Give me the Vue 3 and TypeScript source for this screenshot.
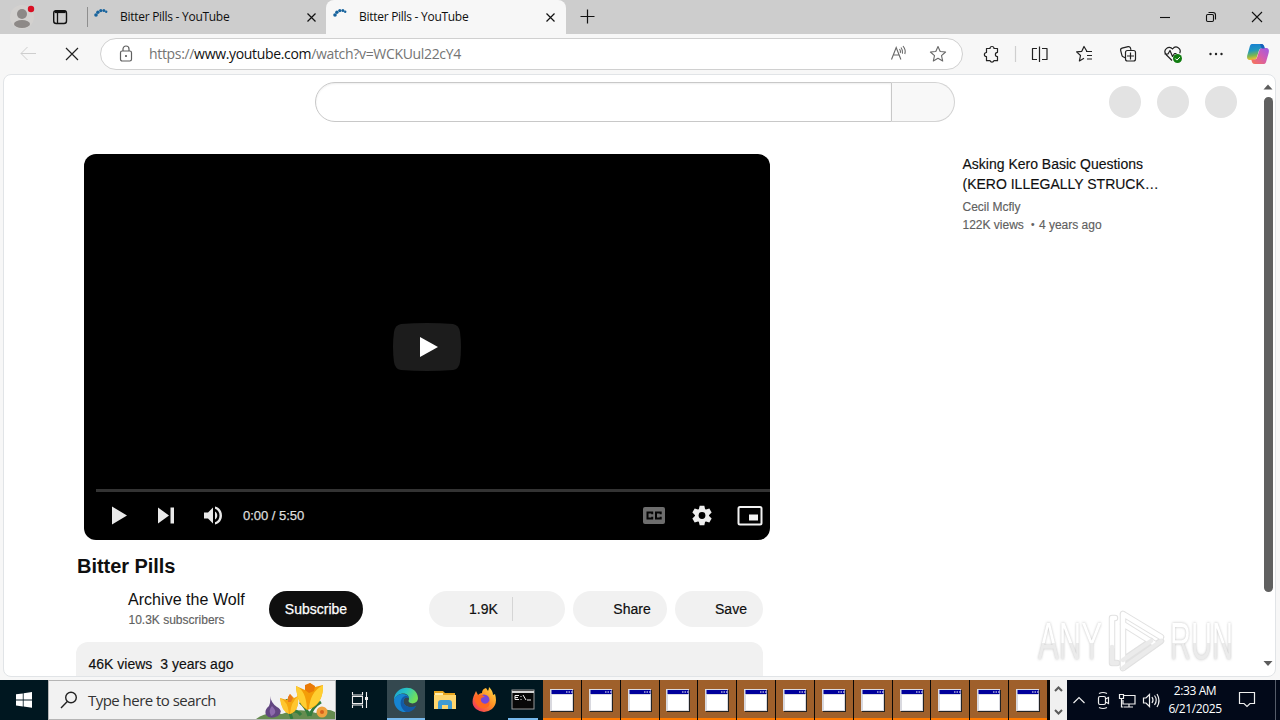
<script setup lang="ts">
interface Tab { title: string; active: boolean }
const tabs: Tab[] = [
  { title: 'Bitter Pills - YouTube', active: false },
  { title: 'Bitter Pills - YouTube', active: true },
]
const windowCount = 13
</script>

<template>
  <div class="screen">
    <header class="tabbar">
      <svg class="profile" width="48" height="34" viewBox="0 0 48 34">
        <circle cx="22" cy="17" r="12" fill="#d3d1cf" />
        <circle cx="22" cy="14" r="5" fill="#8d8987" />
        <ellipse cx="22" cy="24" rx="8" ry="4" fill="#8d8987" />
        <circle cx="31" cy="9" r="3.200" fill="#d90f23" />
      </svg>
      <svg class="workspaces" width="39" height="34" viewBox="48 0 39 34" fill="none" stroke="#111">
        <rect x="53.700" y="10.700" width="12.800" height="12.800" rx="2.500" stroke-width="1.400" />
        <path d="M57.500 13v10" stroke-width="1.300" /><path d="M55 11.700h10.500" stroke-width="2.800" />
      </svg>
      <div v-for="(tab, i) in tabs" :key="i" class="tab" :class="{ active: tab.active }">
        <svg class="spinner" width="16" height="16" viewBox="0 0 16 16">
          <g fill="#17639d"><circle cx="2" cy="7" r="1.800" /><circle cx="3.900" cy="4.200" r="1.700" /><circle cx="6.800" cy="2.600" r="1.600" /><circle cx="9.900" cy="2.500" r="1.500" /><circle cx="12.200" cy="3.700" r="1.200" /></g>
        </svg>
        <span class="tab-title">{{ tab.title }}</span>
        <svg class="close" width="9" height="9" viewBox="0 0 9 9"><path d="M.5.5l8 8M8.500.5l-8 8" stroke="#111" stroke-width="1.200" /></svg>
      </div>
      <svg width="40" height="34" viewBox="566 0 40 34"><path d="M580.500 16.500h14M587.500 9.500v14" stroke="#111" stroke-width="1.200" /></svg>
      <svg class="wincontrols" width="139" height="34" viewBox="1141 0 139 34" fill="none" stroke="#111" stroke-width="1.100">
        <path d="M1160 17.500h10" />
        <rect x="1206.500" y="14.500" width="7" height="7" rx="1.200" /><path d="M1208.500 12.500h4.500q2.500 0 2.500 2.500v4.500" />
        <path d="M1252 12l10 10M1262 12l-10 10" />
      </svg>
    </header>

    <nav class="toolbar">
      <svg width="100" height="40" viewBox="0 34 100 40" fill="none">
        <path d="M36 53.500H21M27.500 47l-6.500 6.500 6.500 6.500" stroke="#cecece" />
        <path d="M66 48l12 12M78 48l-12 12" stroke="#222" stroke-width="1.200" />
      </svg>
      <div class="address">
        <svg class="lock" width="14" height="18" viewBox="0 0 14 18" fill="none" stroke="#5f5f5f" stroke-width="1.200">
          <rect x="1.500" y="6" width="11" height="10" rx="1.700" /><path d="M4 6V4a3 3 0 0 1 6 0v2" /><circle cx="7" cy="11" r=".5" fill="#5f5f5f" />
        </svg>
        <span class="url">https://<b>www.youtube.com</b>/watch?v=WCKUul22cY4</span>
        <svg class="address-icons" width="72" height="30" viewBox="885 39 72 30" fill="none" stroke="#686868" stroke-width="1.100">
          <path d="M891.500 59.500l4.700-12 4.700 12M893.300 55h6" /><path d="M899.500 49q1.500 2 .8 4M901 47.500q2.200 2.800 1.500 6.200M903 46q3.200 4 1.800 8" />
          <path d="M938 46.500l2.200 5 5.400.5-4.100 3.600 1.200 5.400-4.700-2.800-4.700 2.800 1.200-5.400-4.100-3.600 5.400-.5z" stroke-linejoin="round" />
        </svg>
      </div>
      <svg class="tools" width="317" height="40" viewBox="963 34 317 40" fill="none" stroke="#222" stroke-width="1.200" stroke-linejoin="round">
        <path d="M986.500 48.500h3.500a2 2 0 1 1 4 0h3.500v3.800a2 2 0 1 0 0 4.200v4.200h-3.600a2 2 0 0 1-3.800 0h-3.600v-4a2 2 0 1 1 0-4.200z" />
        <path d="M1015.500 46v16" stroke="#cfcfcf" />
        <path d="M1037 48.500h-4.500v11h4.500M1042 48.500h5v11h-5M1039.500 46.500v15.500" />
        <path d="M1087 51.500l-3-5-2.200 4.800-5.200.6 3.900 3.600-1.100 5.400 4.600-2.700" /><path d="M1086 51.500h6M1087 55.500h5M1087 59h5" />
        <path d="M1125 57.800l-2.300-1.300a2 2 0 0 1-.7-.9l-1.300-5a2 2 0 0 1 1.400-2.400l6-1.600a2 2 0 0 1 2.300 1.200l.6 2" /><rect x="1125.500" y="50.500" width="10" height="10.500" rx="2" /><path d="M1130.500 52.500v7M1127 56h7" />
        <path d="M1172 60.500l-6-6c-3.500-4.500 3-10 6.500-5.500 3.500-4.500 9.300-.5 7.200 4.200M1164.500 54h3.500l2-3.500 2.500 6 2-3h2" />
        <circle cx="1177.500" cy="58.500" r="4.500" fill="#107c10" stroke="none" /><path d="M1175.300 58.500l1.600 1.600 3-3" stroke="#fff" stroke-width="1" />
        <g fill="#222" stroke="none"><circle cx="1210.500" cy="54" r="1.200" /><circle cx="1216" cy="54" r="1.200" /><circle cx="1221.500" cy="54" r="1.200" /></g>
        <defs>
          <linearGradient id="cpA" x1="0" y1="0" x2=".2" y2="1"><stop stop-color="#167dd7" /><stop offset=".45" stop-color="#2298bd" /><stop offset=".75" stop-color="#79b653" /><stop offset="1" stop-color="#f4c230" /></linearGradient>
          <linearGradient id="cpB" x1="1" y1="0" x2="0" y2="1"><stop stop-color="#9b5be6" /><stop offset=".45" stop-color="#d25bb2" /><stop offset="1" stop-color="#fb7650" /></linearGradient>
        </defs>
        <g stroke="none">
          <path d="M1252 44h9c2.500 0 3 1.500 3.700 4.500h-3c-2 0-2.600 1.300-3 2.700l-1.700 5.500c-.6 2.100-1.400 3.300-3.500 3.300h-3.500c-3 0-3.400-2.500-2.500-5.500l2-7c.6-2 1-3.500 2.500-3.500z" fill="url(#cpA)" />
          <path d="M1264 64h-9c-2.500 0-3-1.500-3.700-4.500h3c2 0 2.600-1.300 3-2.700l1.700-5.500c.6-2.100 1.400-3.300 3.500-3.300h3.500c3 0 3.400 2.500 2.500 5.500l-2 7c-.6 2-1 3.500-2.500 3.500z" fill="url(#cpB)" />
          <path d="M1260 44h1.500c2 0 2.600 1.600 3.200 4.500h-3z" fill="#1760bb" />
        </g>
      </svg>
    </nav>

    <div class="viewport">
      <main class="page">
        <div class="masthead">
          <div class="searchbox"></div><div class="searchbutton"></div>
          <div class="avatars"><i></i><i></i><i></i></div>
        </div>
        <div class="columns">
          <section class="primary">
            <div class="player">
              <div class="stage">
                <svg width="68" height="48" viewBox="0 0 68 48"><path d="M8 1Q34-1 60 1Q66 2 67 9Q69 24 67 39Q66 46 60 47Q34 49 8 47Q2 46 1 39Q-1 24 1 9Q2 2 8 1Z" fill="#1c1c1c" /><path d="M27 14l18 10-18 10z" fill="#fff" /></svg>
              </div>
              <div class="progress"></div>
              <div class="controls">
                <svg width="147" height="46" viewBox="84 493 147 46" fill="#e9e9e9">
                  <path d="M112 507.500l15 9-15 9zM158 508.500l11 8-11 8zM170.500 508.500h3.500v16h-3.500z" />
                  <path d="M204 513.500v6h4l5 5v-16l-5 5zM215 512.500c3 1.500 3 6.500 0 8zM215 507.500v2.200c6 1.800 6 11.800 0 13.600v2.200c9.300-2 9.300-16 0-18z" />
                </svg>
                <span class="time">0:00 / 5:50</span>
                <svg class="right-controls" width="140" height="46" viewBox="630 493 140 46">
                  <rect x="643" y="508" width="22" height="17" rx="2" fill="#6d6d6d" />
                  <path d="M652.200 515.200v-1.700h-4.700v6h4.700v-1.700M660.700 515.200v-1.700H656v6h4.700v-1.700" fill="none" stroke="#050505" stroke-width="2" />
                  <g transform="translate(702 516.500)" fill="#eee"><g v-for="n in 6" :key="n" :transform="`rotate(${n * 60})`"><path d="M-2.300-9.800h4.600l1.200 5h-7z" /></g><circle r="7" /></g>
                  <circle cx="702" cy="516.500" r="3.400" fill="#000" />
                  <rect x="738.500" y="508" width="23" height="17.500" rx="1.500" fill="none" stroke="#f2f2f2" stroke-width="2" /><path d="M749 515.500h9v6h-9z" fill="#f2f2f2" />
                </svg>
              </div>
            </div>
            <h1>Bitter Pills</h1>
            <div class="meta">
              <div class="owner"><div class="channel">Archive the Wolf</div><div class="subs">10.3K subscribers</div></div>
              <button class="subscribe">Subscribe</button>
              <button class="pill like"><span>1.9K</span><i></i></button>
              <button class="pill share">Share</button>
              <button class="pill save">Save</button>
            </div>
            <div class="description"><span>46K views</span><span>3 years ago</span></div>
          </section>
          <aside class="related">
            <div class="related-title">Asking Kero Basic Questions<br>(KERO ILLEGALLY STRUCK…</div>
            <div class="byline">Cecil Mcfly</div>
            <div class="stats"><span>122K views</span><span class="dot">•</span><span>4 years ago</span></div>
          </aside>
        </div>
      </main>
      <div class="scrollbar">
        <svg width="14" height="10" viewBox="0 0 14 10"><path d="M7 2.500l4.500 5h-9z" fill="#5c5c5c" /></svg>
        <div class="thumb"></div>
        <svg class="down" width="14" height="10" viewBox="0 0 14 10"><path d="M2.500 2h9L7 7z" fill="#5c5c5c" /></svg>
      </div>
      <div class="watermark">
        <span class="any">ANY</span>
        <svg width="66" height="68" viewBox="-1 0 66 68" fill="none" stroke-linejoin="round" stroke-linecap="round">
          <path d="M18 7v54M18 7l38 23M18 17l32 20M10 11H7v45h5M56 34L18 61M46 34L18 53" stroke="#dedede" stroke-width="6.500" />
          <path d="M18 7v54M18 7l38 23M18 17l32 20M10 11H7v30" stroke="#fff" stroke-width="4.500" />
          <path d="M56 34L18 61M46 34L18 53M7 40v16h5" stroke="#e9e9e9" stroke-width="4.500" />
        </svg>
        <span class="run">RUN</span>
      </div>
    </div>

    <footer class="taskbar">
      <div class="start"><svg width="16" height="16" viewBox="0 0 16 16"><path d="M0 2.300l6.800-.9v6.100H0zM7.600 1.300L16 .1v7.400H7.600zM0 8.400h6.800v6.100L0 13.600zM7.600 8.400H16v7.400l-8.400-1.200z" fill="#fff" /></svg></div>
      <div class="tasksearch">
        <svg class="magnifier" width="18" height="18" viewBox="0 0 18 18" fill="none" stroke="#222" stroke-width="1.400"><circle cx="11" cy="6.500" r="5.300" /><path d="M7.300 10.500L1 17" /></svg>
        <span>Type here to search</span>
        <svg class="flowers" width="79" height="38" viewBox="257 681 79 38">
          <path d="M257 719q10-8 26-5q18-7 34-1q10-6 19-1v7z" fill="#668c50" />
          <path d="M293 719q-3-8-5-20M310 716q-3-9-9-14M311 716q2-9 11-14M302 715q-5-6-9-3" fill="none" stroke="#337c3e" stroke-width="3" />
          <path d="M271 696q1 7 7 11q7 4 1 9q-8 4-12-1q-2-5 3-9q2-4 1-10z" fill="#624681" /><path d="M273 706q-4 4-1 10q8-3 1-10z" fill="#8c6aac" />
          <path d="M281 698l7 2 3-6 4 4 4-2q1 17-9 18q-7-3-9-16z" fill="#f5a50f" /><path d="M281 698q8 3 9 16q-8-3-9-16zM299 696q-7 6-8 18q10-4 8-18z" fill="#ffc62f" /><path d="M289 697l2-3 3 4-2 4h-3z" fill="#e8791c" />
          <path d="M297 686l9 4 5-7 5 4 8-2q0 21-16 25q-10-6-11-24z" fill="#f49d07" /><path d="M297 686q10 4 11 23q-10-5-11-23zM324 685q-13 7-14 24q15-6 14-24z" fill="#ffce31" /><path d="M306 685l5-2 5 3-1 5-5 2-4-3z" fill="#e97907" />
          <circle cx="323" cy="712" r="5.500" fill="#f0a23e" /><circle cx="323" cy="712" r="2" fill="#d7611b" />
        </svg>
      </div>
      <div class="taskview"><svg width="18" height="18" viewBox="0 0 18 18" fill="none" stroke="#eee" stroke-width="1.100"><path d="M1.500 1v3h10V1M1.500 17v-3h10v3M1.500 5.500v7h10v-7zM15.500 1v16" /><path d="M15.500 6v3" stroke-width="3" /></svg></div>
      <div class="app edge">
        <svg width="26" height="26" viewBox="0 0 26 26">
          <defs><linearGradient id="eg" x1="0" y1="0" x2="1" y2=".4"><stop stop-color="#169bd7" /><stop offset=".5" stop-color="#29c4c3" /><stop offset="1" stop-color="#71df5a" /></linearGradient></defs>
          <path d="M1 13C1-2 24-4 25 11c0 5-6 7-9 4-1-1 0-1.500 0-3.500C16 5 5 4 1 13z" fill="url(#eg)" />
          <path d="M1 13C4 5 15 6 16 11c-2-2-6 0-5.500 4C11 20 19 22 23 19 15 30 1 25 1 13z" fill="#1685d2" /><path d="M12 9c-6 2-6 12 1 16 5 0 8-2 10-6-7 3-13-1-12.500-5 0-2 1-4 5-3C15 9.500 14 8.500 12 9z" fill="#125aa6" />
        </svg>
      </div>
      <div class="app"><svg width="24" height="22" viewBox="0 0 24 22"><path d="M1 2h9l2 2h10v6H1z" fill="#e8a51d" /><path d="M1 6h22v14H1z" fill="#ffd66d" /><path d="M2 4h8v2H2z" fill="#fff0b0" /><path d="M5 20v-6q0-3 3-3h8q3 0 3 3v6h-4v-4H9v4z" fill="#409bd4" /></svg></div>
      <div class="app"><svg width="26" height="26" viewBox="0 0 26 26">
        <defs><linearGradient id="ff" x1="1" y1="0" x2="0" y2="1"><stop stop-color="#ffe84a" /><stop offset=".45" stop-color="#ff8e23" /><stop offset="1" stop-color="#ee2468" /></linearGradient></defs>
        <path d="M5 4l2 4q2-2 4-2 0-4 4-5l2 3q1-2 1-4 4 4 4 8l2-1q3 10-3 15-8 6-16 0C-1 17 2 10 5 4z" fill="url(#ff)" /><circle cx="13" cy="13" r="5.500" fill="#7548d8" /><path d="M4 9q6-3 10 1-5 0-4 4c2 4 7 3 8 0 3 6-6 10-11 5-3-3-4-7-3-10z" fill="#ff671f" />
      </svg></div>
      <div class="app cmd"><svg width="24" height="22" viewBox="0 0 24 22"><rect x="1" y="1" width="22" height="19" fill="#080808" stroke="#999" /><path d="M1 2h22v2H1z" fill="#d5d5d5" /><path d="M8 6.500H4v4h4M10 7v1M10 10v1M12 6l3 5M16 11h4M4 8.500h3" stroke="#eee" fill="none" /></svg></div>
      <div class="windows">
        <div v-for="n in windowCount" :key="n" class="app winapp"><svg width="25" height="24" viewBox="0 0 25 24"><path d="M1 1h23v22H1z" fill="#222" /><path d="M0 0h23v22H0z" fill="#d9d9df" /><path d="M1.500 1h21v4h-21z" fill="#00009b" /><path d="M16 3h1.500M18.500 3H20M21 3h1.500" stroke="#fff" /><path d="M2 6h20v15H2z" fill="#fff" /></svg></div>
      </div>
      <div class="overflow"><svg width="17" height="40" viewBox="0 0 17 40" fill="none" stroke="#5a5a5a" stroke-width="2"><path d="M5 11l3.500-3.500L12 11M5 30l3.500 3.500L12 30" /></svg></div>
      <div class="tray">
        <svg width="96" height="40" viewBox="1067 680 96 40" fill="none" stroke="#eee" stroke-width="1.200">
          <path d="M1073.500 703l5.500-5.500 5.500 5.500" /><rect x="1098.500" y="696.500" width="7" height="8" rx="1.500" /><path d="M1105.500 699l3-1.500v6l-3-1.500M1099 693.500q4-2 8 0M1099 707.500q4 2 8 0" />
          <path d="M1124 695.500h11v8.500h-12v-4M1129 704v3M1124 707h9M1119.500 694.500h4v4h-4zM1121.500 699v8h2" />
          <path d="M1143.500 698v5h2.500l3.500 3.500v-12L1146 698zM1152 697q2 3 0 6M1154.500 695.500q3.500 4.500 0 9.500M1157 694q4 6.500 0 13" />
        </svg>
        <div class="clock"><span>2:33 AM</span><span>6/21/2025</span></div>
        <svg class="notice" width="18" height="18" viewBox="0 0 18 18" fill="none" stroke="#eee" stroke-width="1.200"><path d="M1.500 1.500h15v11H12l-3 3-3-3H1.500z" /></svg>
        <i class="showdesktop"></i>
      </div>
    </footer>
  </div>
</template>

<style>
body { overflow: hidden; }
</style>
<style scoped>
* { box-sizing: border-box; }
svg { display: block; flex: none; }
.screen { width: 1280px; height: 720px; display: flex; flex-direction: column; background: #f7f7f7; font-family: "Liberation Sans", Arial, sans-serif; color: #0f0f0f; white-space: nowrap; overflow: hidden; }
.tabbar { height: 34px; flex: none; display: flex; background: #cdcdcd; }
.tab { width: 239px; height: 34px; display: flex; align-items: center; padding: 0 10px 0 7px; font: 12px "Open Sans", sans-serif; position: relative; }
.tab:not(.active)::before { content: ""; position: absolute; left: 0; top: 7px; height: 20px; width: 1px; background: #8e8e8e; }
.tab.active { width: 240px; background: #f7f7f7; border-radius: 8px 8px 0 0; }
.spinner { margin-top: -2px; }
.tab-title { margin: -2px 0 0 10px; letter-spacing: -.28px; }
.tab .close { margin: 1px 0 0 auto; }
.tab.active .close { margin-right: 1px; }
.wincontrols { margin-left: auto; }
.toolbar { height: 40px; flex: none; display: flex; align-items: center; background: #f7f7f7; }
.address { width: 863px; height: 32px; display: flex; align-items: center; border: 1px solid #d0d0d0; border-radius: 16px; background: #fff; padding: 0 5px 0 18px; }
.url { margin: -1px 0 0 16px; color: #747474; font: 14px "Open Sans", sans-serif; letter-spacing: -.33px; }
.url b { font-weight: 400; color: #111; }
.address-icons { margin-left: auto; }
.viewport { width: 1273px; height: 603px; flex: none; margin: 0 0 3px 3px; border: 1px solid #e1e4e7; border-radius: 8px; background: #fff; display: flex; position: relative; overflow: hidden; }
.page { width: 1257px; flex: none; }
.masthead { height: 48px; padding: 8px 0 0 311px; margin-top: -1px; display: flex; }
.searchbox { width: 577px; height: 40px; border: 1px solid #c8c8c8; border-radius: 20px 0 0 20px; box-shadow: inset 0 1px 2px #eee; }
.searchbutton { width: 63px; height: 40px; background: #f8f8f8; border: 1px solid #d3d3d3; border-left: 0; border-radius: 0 20px 20px 0; }
.avatars { display: flex; gap: 16px; margin: 4px 0 0 154px; }
.avatars i { width: 32px; height: 32px; border-radius: 50%; background: #e3e3e3; }
.columns { display: flex; padding: 32px 0 0 72px; }
.primary { width: 695px; }
.player { margin-left: 8px; width: 686px; height: 386px; background: #000; border-radius: 12px; overflow: hidden; display: flex; flex-direction: column; }
.stage { padding: 169px 0 0 309px; height: 335px; flex: none; }
.progress { height: 3px; margin-left: 12px; background: #333; flex: none; }
.controls { height: 46px; display: flex; align-items: center; }
.time { margin-left: 12px; color: #ddd; font: 13.080px "Liberation Sans"; letter-spacing: -.05px; -webkit-text-stroke: .25px; }
.right-controls { margin-left: auto; }
h1 { margin: 12px 0 10px 1px; height: 28px; line-height: 28px; font-size: 20px; font-weight: 700; letter-spacing: -.04px; }
.meta { display: flex; height: 38px; margin-top: 11px; }
.owner { width: 141px; margin: -2px 0 0 52px; }
.channel { font-size: 16px; line-height: 22px; letter-spacing: .04px; }
.subs { font-size: 12px; line-height: 18px; color: #606060; padding-left: .5px; -webkit-text-stroke: .15px; }
button { border: 0; height: 36px; padding: 0; border-radius: 18px; font: 14px "Liberation Sans"; color: #0f0f0f; background: #f1f1f1; }
.subscribe { width: 94px; background: #0f0f0f; color: #fff; -webkit-text-stroke: .25px; }
.like { width: 136px; margin-left: 66px; display: flex; align-items: center; padding-left: 40px; }
.like i { height: 24px; width: 1px; background: #d5d5d5; margin-left: 14px; }
.pill { -webkit-text-stroke: .2px; }
.share { width: 94px; margin-left: 8px; padding-left: 24px; }
.save { width: 88px; margin-left: 8px; padding-left: 24px; }
.description { width: 687px; height: 80px; margin-top: 13px; background: #f1f1f1; border-radius: 12px; font-size: 14px; line-height: 20px; padding: 12px 12.500px; display: flex; gap: 8px; -webkit-text-stroke: .15px; }
.related { width: 220px; margin-left: 191.500px; }
.related-title { font-size: 14px; line-height: 20px; -webkit-text-stroke: .15px; }
.byline, .stats { color: #606060; font-size: 12px; line-height: 18px; -webkit-text-stroke: .15px; }
.byline { margin-top: 4px; }
.stats { display: flex; }
.dot { margin: 0 4.500px 0 7px; font-size: 10px; }
.scrollbar { width: 14px; flex: none; display: flex; flex-direction: column; align-items: center; padding-top: 7px; height: 601px; }
.thumb { width: 9px; height: 495px; margin-top: 5px; border-radius: 5px; background: #606060; flex: none; }
.down { margin: auto 0 7px; }
.watermark { position: absolute; left: 1034px; top: 532px; display: flex; align-items: center; font: 52px/56px "Liberation Sans"; opacity: .9; }
.watermark span { transform-origin: left; background: linear-gradient(#fff 54%, #e9e9e9 54%); background-clip: text; -webkit-background-clip: text; color: transparent; filter: drop-shadow(0 0 1.500px #bcbcbc); }
.watermark .any { width: 108px; margin-right: -42px; transform: scaleX(.6); }
.watermark .run { width: 113px; margin-right: -50px; transform: scaleX(.56); }
.taskbar { height: 40px; flex: none; display: flex; background: #001720; color: #fff; }
.start { width: 48px; display: grid; place-items: center; }
.tasksearch { width: 288px; display: flex; align-items: center; background: #f2f2f2; border: 1px solid #b5b5b5; color: #333; font: 15px "Open Sans", sans-serif; }
.magnifier { margin-left: 11px; }
.tasksearch span { margin-left: 10px; letter-spacing: -.53px; }
.flowers { margin-left: auto; }
.taskview { width: 51px; display: grid; place-items: center; padding-right: 4px; }
.app { width: 38px; height: 40px; display: grid; place-items: center; margin-right: 1px; flex: none; }
.edge { background: #34484f; border-bottom: 2px solid #76b9ed; }
.edge svg { margin-top: 2px; }
.cmd { background: linear-gradient(#76b9ed, #76b9ed) 4px 38px / 30px 2px no-repeat; }
.windows { display: flex; width: 507px; overflow: hidden; flex: none; background: #0a0806; }
.winapp { width: 37.850px; background: #9f602b; border-bottom: 2px solid #ff7900; }
.winapp svg { margin: 3px 0 0 1px; }
.overflow { width: 17px; background: #f0f0f0; }
.tray { flex: 1; background: #020919; display: flex; }
.clock { width: 64px; display: flex; flex-direction: column; align-items: center; font: 12px/18px "Open Sans", sans-serif; padding-top: 2px; letter-spacing: -.4px; }
.notice { margin: 11px 0 0 11px; }
.showdesktop { border-left: 1px solid #555c69; margin-left: auto; width: 5px; }
</style>
